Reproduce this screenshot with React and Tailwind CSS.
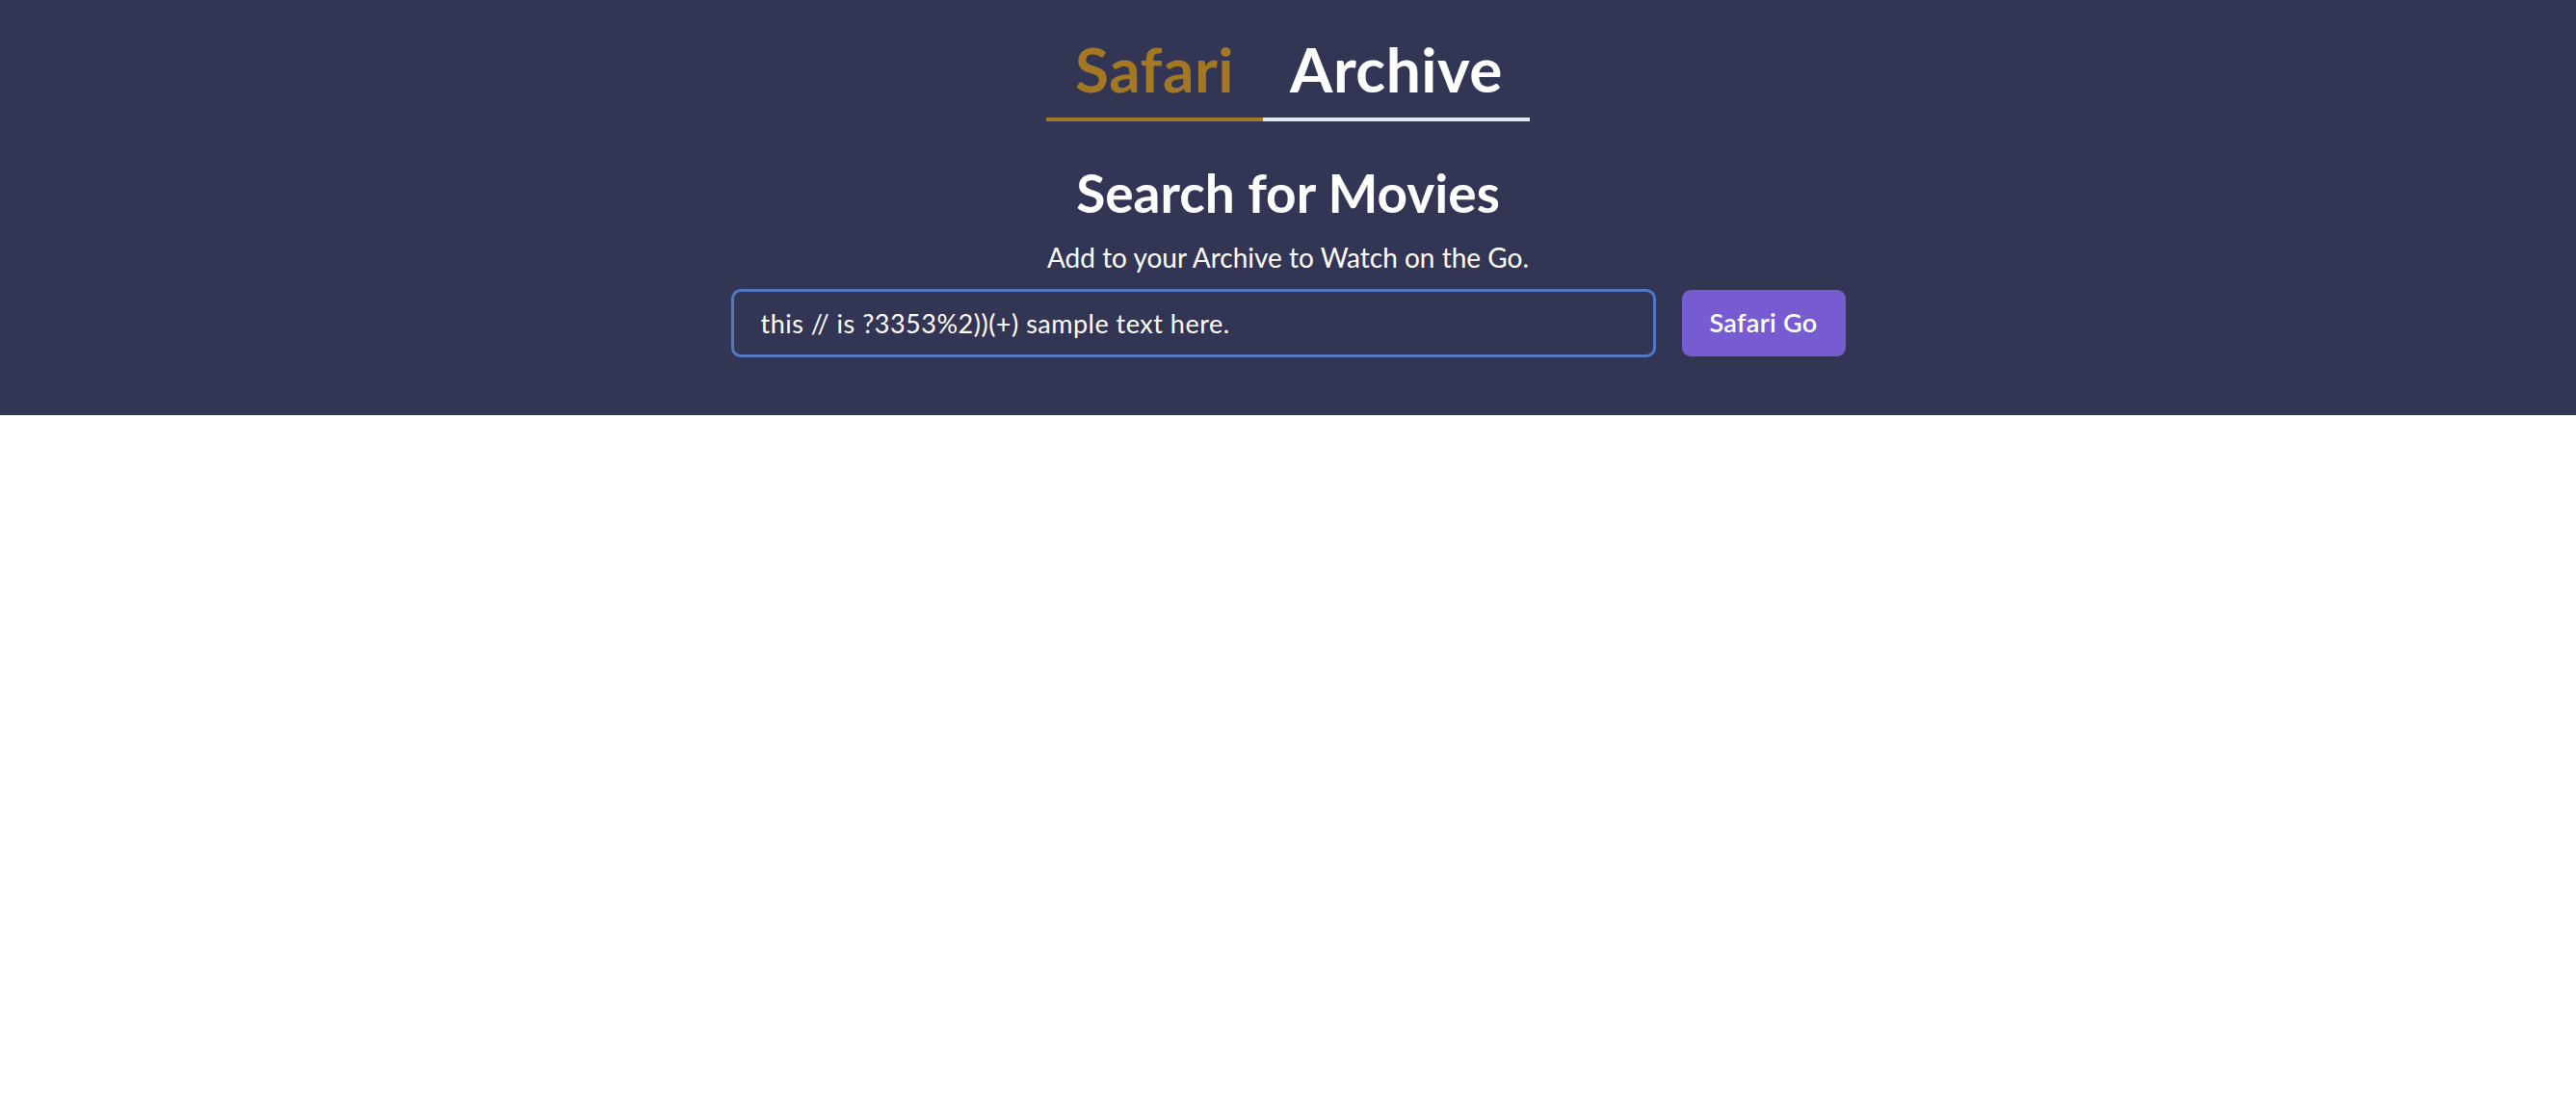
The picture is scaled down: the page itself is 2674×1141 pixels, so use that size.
import { useEffect, useRef } from "react";

const Tabs = () => {
  return (
    <div className="flex justify-center pt-[40px]">
      <div className="w-[225px] text-center pb-[18px] border-b-4 border-[#a47724] text-[64px] leading-none font-bold tracking-[0.5px] text-[#a47724]">
        Safari
      </div>
      <div className="w-[277px] text-center pb-[18px] border-b-4 border-[#e4e6f0] text-[64px] leading-none font-bold tracking-[0.5px] text-white">
        Archive
      </div>
    </div>
  );
};

const SearchBar = () => {
  const inputRef = useRef(null);

  useEffect(() => {
    const el = inputRef.current;
    if (el) {
      el.focus();
      const len = el.value.length;
      el.setSelectionRange(len, len);
    }
  }, []);

  return (
    <div className="flex justify-center items-center gap-[27px] mt-[19px]">
      <input
        ref={inputRef}
        type="text"
        defaultValue="this // is ?3353%2))(+) sample text here."
        className="w-[960px] h-[71px] rounded-[10px] border-[3px] border-[#5079c6] bg-[#333554] pl-[28px] pr-4 text-[27px] tracking-[0.5px] text-white caret-white outline-none"
      />
      <button className="w-[170px] h-[69px] rounded-[9px] bg-[#775bd0] text-[27px] font-semibold tracking-[0.3px] text-white">
        Safari Go
      </button>
    </div>
  );
};

export default function App() {
  return (
    <div className="min-h-screen bg-white font-['Lato',_'Liberation_Sans',_sans-serif]">
      <header className="bg-[#333554] h-[431px] flex flex-col">
        <Tabs />
        <h1 className="mt-[47px] text-center text-[55px] leading-none font-bold text-white">
          Search for Movies
        </h1>
        <p className="mt-[25px] text-center text-[28px] leading-none text-white">
          Add to your Archive to Watch on the Go.
        </p>
        <SearchBar />
      </header>
    </div>
  );
}
